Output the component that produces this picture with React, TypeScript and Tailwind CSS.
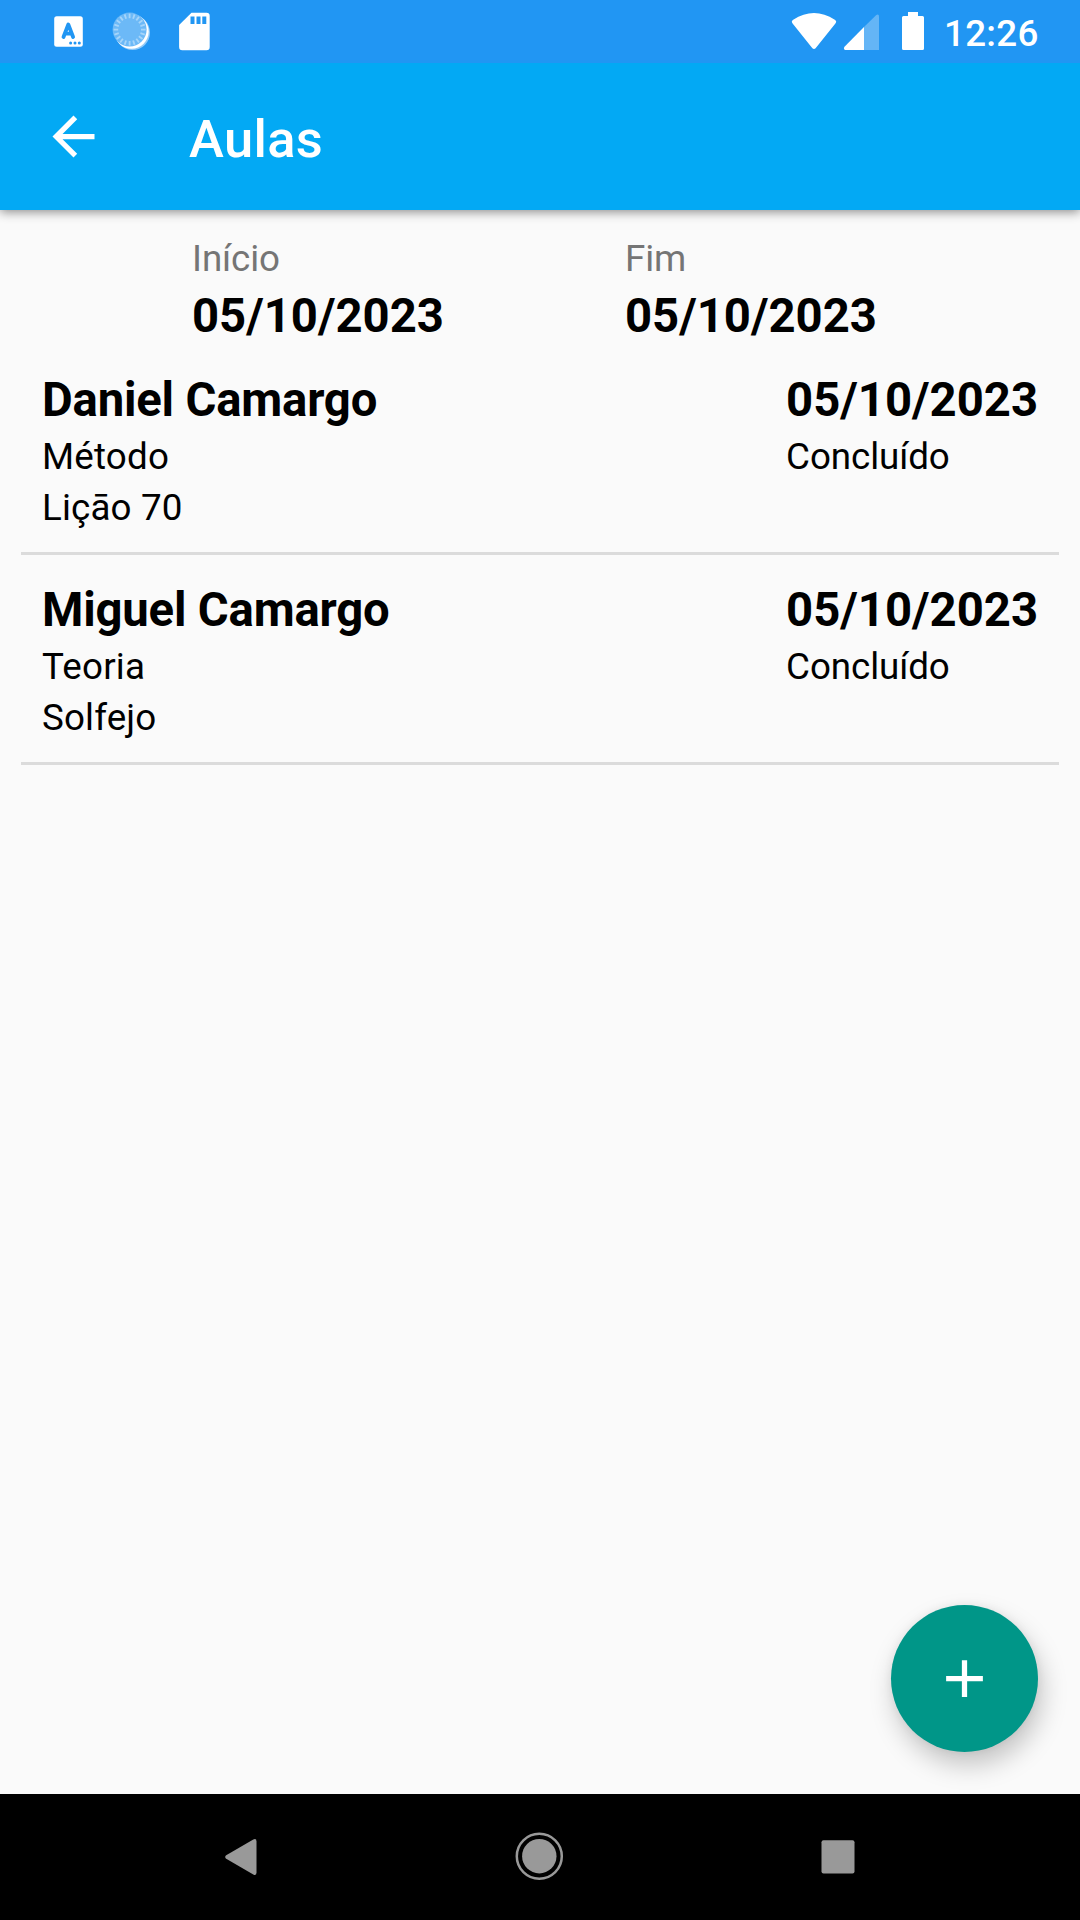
import React from "react";

type Lesson = {
  student: string;
  subject: string;
  detail: string;
  date: string;
  status: string;
};

const lessons: Lesson[] = [
  { student: "Daniel Camargo", subject: "Método", detail: "Liçāo 70", date: "05/10/2023", status: "Concluído" },
  { student: "Miguel Camargo", subject: "Teoria", detail: "Solfejo", date: "05/10/2023", status: "Concluído" },
];

function StatusBar() {
  const ticks = Array.from({ length: 20 }, (_, i) => i * 18);
  return (
    <div className="relative z-20 flex h-[63px] shrink-0 items-start justify-between bg-[#2196f3] text-white">
      <svg width="230" height="63" viewBox="0 0 230 63" fill="none">
        <rect x="54.2" y="16.2" width="28.6" height="30.6" rx="2.5" fill="white" />
        <path d="M63.5 37L68.3 24.5L73.1 37M65.2 33.6H71.4" stroke="#2196f3" strokeWidth="3.8" strokeLinecap="round" strokeLinejoin="round" />
        <g fill="#2196f3">
          <circle cx="70.6" cy="43" r="1.5" />
          <circle cx="75" cy="43" r="1.5" />
          <circle cx="79.3" cy="43" r="1.5" />
        </g>
        <circle cx="132.6" cy="32.6" r="17.4" fill="#90caf9" />
        <circle cx="131.5" cy="31.5" r="17.2" fill="white" />
        <circle cx="129.6" cy="29.6" r="17" fill="#6cb9f7" />
        {ticks.map((angle) => (
          <path key={angle} d="M129.6 13.6V18.2" stroke="#a6d5fa" strokeWidth="1.8" transform={`rotate(${angle} 129.6 29.6)`} />
        ))}
        <path d="M191.5 12.7H206.5Q209.7 12.7 209.7 16V47Q209.7 50.3 206.5 50.3H182.3Q179.1 50.3 179.1 47V25Z" fill="white" />
        <path d="M190.5 16.5H194.5V24H190.5ZM196.5 16.5H200.5V24H196.5ZM202.3 16.5H206.3V24H202.3Z" fill="#2196f3" />
      </svg>
      <div className="flex w-[294px]">
        <svg className="shrink-0" width="150" height="63" viewBox="786 0 150 63">
          <path d="M791.8 21.8Q791.8 20.6 793.2 19.7C807 10.8 821 10.8 834.8 19.7Q836.2 20.6 836.2 21.8Q836 22.7 835.2 23.7L815.6 48.2Q814 49.8 812.4 48.2L792.8 23.7Q792 22.7 791.8 21.8Z" fill="white" />
          <path d="M864 27L876.3 14.9Q879 13.5 879 16.5V50H864Z" fill="#64b5f6" />
          <path d="M864 27V50H845.2Q843 48.8 844.5 46.7Z" fill="white" />
          <path d="M908 12H918V16H922.5Q924 16 924 17.5V48.5Q924 50 922.5 50H903.5Q902 50 902 48.5V17.5Q902 16 903.5 16H908Z" fill="white" />
        </svg>
        <span className="ml-[8px] mt-[2px] text-[36.75px] font-medium leading-[63px] tracking-[0.3px]">12:26</span>
      </div>
    </div>
  );
}

function AppBar() {
  return (
    <header className="relative z-10 flex h-[147px] shrink-0 items-center bg-[#03a9f4] pl-[42px] text-white shadow-[0_2px_10px_rgba(0,0,0,0.45)]">
      <svg width="63" height="63" viewBox="0 0 24 24" fill="white">
        <path d="M20 11H7.83l5.59-5.59L12 4l-8 8 8 8 1.41-1.41L7.83 13H20v-2z" />
      </svg>
      <h1 className="ml-[84px] mt-[4px] text-[52.5px] font-medium leading-[60px] tracking-[0.35px]">Aulas</h1>
    </header>
  );
}

function DateField({ label, value }: { label: string; value: string }) {
  return (
    <div className="w-[433px]">
      <div className="text-[36.75px] leading-[51px] tracking-[-0.1px] text-[#757575]">{label}</div>
      <div className="mt-1 text-[47.25px] font-bold leading-[56px]">{value}</div>
    </div>
  );
}

function LessonRow({ lesson }: { lesson: Lesson }) {
  return (
    <li className="mx-[21px] flex h-[210px] justify-between border-b-[3px] border-[#dbdbdb] px-[21px] pt-[27px]">
      <div>
        <div className="text-[47.25px] font-bold leading-[56px] tracking-[-0.18px]">{lesson.student}</div>
        <div className="mt-[3px] text-[36.75px] leading-[51px] tracking-[0.2px]">{lesson.subject}</div>
        <div className="text-[36.75px] leading-[51px] tracking-[0.15px]">{lesson.detail}</div>
      </div>
      <div>
        <div className="text-[47.25px] font-bold leading-[56px]">{lesson.date}</div>
        <div className="mt-[3px] text-[36.75px] leading-[51px] tracking-[-0.08px]">{lesson.status}</div>
      </div>
    </li>
  );
}

function NavBar() {
  return (
    <nav className="flex h-[126px] shrink-0 items-start bg-black pl-[209px] pt-[31px]">
      <svg width="63" height="63" viewBox="209 1825 63 63" fill="#999">
        <path d="M226.2 1855.3L253.3 1839.5Q256.5 1838 256.5 1841.5V1872.5Q256.5 1876 253.3 1874.4L226.2 1858.8Q224.2 1857 226.2 1855.3Z" />
      </svg>
      <svg className="ml-[236px]" width="63" height="63" viewBox="508 1825 63 63">
        <circle cx="539.3" cy="1856.2" r="22.5" fill="none" stroke="#999" strokeWidth="2.5" />
        <circle cx="539.3" cy="1856.2" r="17.2" fill="#999" />
      </svg>
      <svg className="ml-[236px]" width="63" height="63" viewBox="807 1825 63 63">
        <rect x="821.5" y="1840.3" width="33" height="33.3" rx="2" fill="#999" />
      </svg>
    </nav>
  );
}

export default function App() {
  return (
    <div className="relative flex h-[1920px] w-[1080px] flex-col overflow-hidden bg-[#fafafa] font-['Roboto',sans-serif] text-black">
      <StatusBar />
      <AppBar />
      <main className="flex-1">
        <div className="flex h-[135px] pl-[192px] pt-[23px]">
          <DateField label="Início" value="05/10/2023" />
          <DateField label="Fim" value="05/10/2023" />
        </div>
        <ul>
          {lessons.map((lesson) => (
            <LessonRow key={lesson.student} lesson={lesson} />
          ))}
        </ul>
      </main>
      <button
        aria-label="Adicionar aula"
        className="absolute bottom-[168px] right-[42px] flex size-[147px] items-center justify-center rounded-full bg-[#009688] shadow-[4px_13px_26px_rgba(0,0,0,0.22),0_0_10px_rgba(0,0,0,0.06)]"
      >
        <svg width="63" height="63" viewBox="0 0 24 24" fill="white">
          <path d="M19 13h-6v6h-2v-6H5v-2h6V5h2v6h6v2z" />
        </svg>
      </button>
      <NavBar />
    </div>
  );
}
